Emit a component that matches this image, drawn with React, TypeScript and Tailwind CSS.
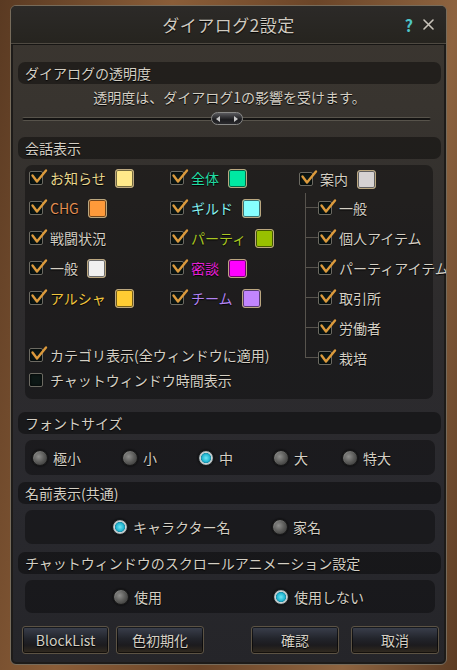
import React from 'react';

const txt = "text-[14px] text-[#d4cfc4] [text-shadow:0_1px_1px_#000]";

function Check({ on = true }: { on?: boolean }) {
  return (
    <span className="relative inline-block w-[14px] h-[14px] shrink-0 rounded-[2px] border border-[#6c6a62] bg-[#0c1715] shadow-[inset_0_0_3px_#000]">
      {on && (
        <svg className="absolute left-[-1px] top-[-6px]" width="20" height="20" viewBox="0 0 20 20">
          <path d="M3.5 9.5 L8 15.5 L17 4.5" fill="none" stroke="#dc9a3c" strokeWidth="2.4" strokeLinecap="round" strokeLinejoin="round" />
        </svg>
      )}
    </span>
  );
}

function Swatch({ color }: { color: string }) {
  return (
    <span
      className="inline-block w-[19px] h-[19px] shrink-0 rounded-[3px] border border-[#bba77f] shadow-[inset_0_0_0_1px_rgba(0,0,0,0.55)]"
      style={{ backgroundColor: color }}
    />
  );
}

function Row({ label, color, swatch, on = true }: { label: string; color?: string; swatch?: string; on?: boolean }) {
  return (
    <div className="flex items-center h-[26px]">
      <Check on={on} />
      <span className={`ml-[7px] ${txt} leading-none`} style={color ? { color } : undefined}>{label}</span>
      {swatch && <span className="ml-[9px] flex"><Swatch color={swatch} /></span>}
    </div>
  );
}

function Radio({ on = false }: { on?: boolean }) {
  return on ? (
    <span className="inline-block w-[16px] h-[16px] shrink-0 rounded-full border border-[#1a1d1f] bg-[radial-gradient(circle_at_50%_50%,#6fe6f4_0%,#22b6d2_38%,#1a8ea6_48%,#cfd8da_55%,#8e9698_75%,#2a2c2e_100%)] shadow-[0_0_2px_#000]" />
  ) : (
    <span className="inline-block w-[16px] h-[16px] shrink-0 rounded-full border border-[#1a1a1a] bg-[radial-gradient(circle_at_40%_40%,#8e8e8c_0%,#5e5e5c_45%,#2c2c2c_100%)] shadow-[inset_1px_1px_1px_rgba(255,255,255,0.15),0_0_2px_#000]" />
  );
}

function Opt({ label, on, w }: { label: string; on?: boolean; w?: string }) {
  return (
    <div className={`flex items-center gap-[5px] ${w ?? ''}`}>
      <Radio on={on} />
      <span className={`${txt} leading-none`}>{label}</span>
    </div>
  );
}

function Header({ children, className = '' }: { children: React.ReactNode; className?: string }) {
  return (
    <div className={`h-[22px] w-[423px] rounded-[7px] bg-black/40 flex items-center pl-[7px] ${txt} ${className}`}>
      {children}
    </div>
  );
}

function Btn({ children, w, className = '' }: { children: React.ReactNode; w: string; className?: string }) {
  return (
    <button className={`${w} h-[28px] rounded-[3px] border border-[#5c5344] bg-[linear-gradient(to_bottom,#3b404d,#22242b_45%,#1c1b1e_70%,#332b1f)] shadow-[inset_0_0_0_1px_rgba(0,0,0,0.6)] flex items-center justify-center ${txt} ${className}`}>
      {children}
    </button>
  );
}

const treeChildren = ['一般', '個人アイテム', 'パーティアイテム', '取引所', '労働者', '栽培'];

export default function App() {
  return (
    <div className="w-[457px] h-[670px] overflow-hidden bg-[linear-gradient(100deg,#5a3a22,#8a5d38_30%,#6b4528_55%,#8e6440_80%,#5c3c24)] pt-[5px] pl-[10px] font-['Noto_Sans_CJK_JP','Noto_Sans',sans-serif]">
      <div className="w-[437px] h-[660px] overflow-hidden rounded-[6px] border border-[#776b5a] bg-[linear-gradient(to_bottom,#3b3630,#38342f_15%,#2e2c2d_45%,#29292e_75%,#252529)] shadow-[inset_0_0_0_2px_#1d1b19]">
        {/* title bar */}
        <div className="h-[38px] grid grid-cols-[1fr_auto_1fr] items-center bg-[linear-gradient(to_bottom,#2c2a28,#26241f)] border-b border-[#4f4a42] shadow-[0_1px_0_#161513]">
          <div />
          <div className="text-[17px] text-[#cfcac0] [text-shadow:0_1px_1px_#000] tracking-[0.5px]">ダイアログ2設定</div>
          <div className="flex justify-end items-center gap-[10px] pr-[12px]">
            <span className="text-[16px] font-bold text-[#4ec3c6] leading-none">?</span>
            <svg width="11" height="11" viewBox="0 0 11 11">
              <path d="M1 1 L10 10 M10 1 L1 10" stroke="#c9c4ba" strokeWidth="1.6" strokeLinecap="round" />
            </svg>
          </div>
        </div>

        <div className="pl-[7px]">
          <Header className="mt-[18px]">ダイアログの透明度</Header>
          <div className={`mt-[2px] h-[22px] w-[423px] flex items-center justify-center ${txt} text-[#c9c4b9]`}>透明度は、ダイアログ1の影響を受けます。</div>

          {/* slider */}
          <div className="mt-[4px] h-[13px] w-[409px] ml-[4px] flex items-center">
            <div className="flex-1 h-[4px] rounded-l-full bg-[#141312] border-y border-[#57534b]" />
            <div className="w-[32px] h-[13px] rounded-full border border-[#8a8a88] bg-[linear-gradient(to_bottom,#5a5a5e,#1c1c1f_60%,#2a2a2e)] flex items-center justify-between px-[4px]">
              <span className="w-0 h-0 border-y-[3px] border-y-transparent border-r-[4px] border-r-[#c8c8c8]" />
              <span className="w-0 h-0 border-y-[3px] border-y-transparent border-l-[4px] border-l-[#c8c8c8]" />
            </div>
            <div className="flex-1 h-[4px] rounded-r-full bg-[#141312] border-y border-[#57534b]" />
          </div>

          <Header className="mt-[12px]">会話表示</Header>

          {/* chat display panel */}
          <div className="mt-[6px] ml-[7px] w-[408px] h-[234px] rounded-[7px] bg-black/35 flex">
            <div className="w-[274px] pl-[4px]">
              <div className="grid grid-cols-[141px_129px] gap-y-[4px]">
                <Row label="お知らせ" color="#e8d78e" swatch="#ffe98a" />
                <Row label="全体" color="#22dba2" swatch="#00e9a2" />
                <Row label="CHG" color="#e38e52" swatch="#ff9a3a" />
                <Row label="ギルド" color="#86f1f1" swatch="#86ffff" />
                <Row label="戦闘状況" />
                <Row label="パーティ" color="#a8c622" swatch="#98c000" />
                <Row label="一般" swatch="#f0f0f0" />
                <Row label="密談" color="#e41fd6" swatch="#ff00ff" />
                <Row label="アルシャ" color="#f2c63e" swatch="#ffcc33" />
                <Row label="チーム" color="#b283f2" swatch="#c285ff" />
              </div>
              <div className="mt-[31px] h-[25px] flex items-center">
                <Check />
                <span className={`ml-[7px] ${txt} leading-none`}>カテゴリ表示(全ウィンドウに適用)</span>
              </div>
              <div className="h-[25px] flex items-center">
                <Check on={false} />
                <span className={`ml-[7px] ${txt} leading-none`}>チャットウィンドウ時間表示</span>
              </div>
            </div>

            {/* guide tree */}
            <div className="flex-1 min-w-0">
              <div className="h-[28px] flex items-center">
                <Check />
                <span className={`ml-[7px] ${txt} leading-none`}>案内</span>
                <span className="ml-[9px] flex"><Swatch color="#d6d2d2" /></span>
              </div>
              <div className="ml-[6px]">
                {treeChildren.map((c, i) => (
                  <div key={c} className="flex h-[30px] items-stretch">
                    <div className="w-[13px] shrink-0 flex flex-col">
                      <div className="h-[15px] border-l border-b border-[#57534d]" />
                      <div className={`flex-1 ${i < treeChildren.length - 1 ? 'border-l border-[#57534d]' : ''}`} />
                    </div>
                    <div className="flex items-center whitespace-nowrap">
                      <Check />
                      <span className={`ml-[7px] ${txt} text-[13.5px] leading-none`}>{c}</span>
                    </div>
                  </div>
                ))}
              </div>
            </div>
          </div>

          <Header className="mt-[13px]">フォントサイズ</Header>
          <div className="mt-[6px] ml-[7px] w-[410px] h-[35px] rounded-[7px] bg-black/35 flex items-center pl-[7px]">
            <Opt label="極小" w="w-[90px]" />
            <Opt label="小" w="w-[76px]" />
            <Opt label="中" on w="w-[75px]" />
            <Opt label="大" w="w-[69px]" />
            <Opt label="特大" />
          </div>

          <Header className="mt-[7px]">名前表示(共通)</Header>
          <div className="mt-[6px] ml-[7px] w-[410px] h-[34px] rounded-[7px] bg-black/35 flex items-center pl-[87px]">
            <Opt label="キャラクター名" on w="w-[160px]" />
            <Opt label="家名" />
          </div>

          <Header className="mt-[8px]">チャットウィンドウのスクロールアニメーション設定</Header>
          <div className="mt-[6px] ml-[7px] w-[410px] h-[33px] rounded-[7px] bg-black/35 flex items-center pl-[88px]">
            <Opt label="使用" w="w-[160px]" />
            <Opt label="使用しない" on />
          </div>

          {/* buttons */}
          <div className="mt-[13px] pl-[4px] flex">
            <Btn w="w-[87px]">BlockList</Btn>
            <Btn w="w-[88px]" className="ml-[7px]">色初期化</Btn>
            <Btn w="w-[88px]" className="ml-[47px]">確認</Btn>
            <Btn w="w-[88px]" className="ml-[12px]">取消</Btn>
          </div>
        </div>
      </div>
    </div>
  );
}
